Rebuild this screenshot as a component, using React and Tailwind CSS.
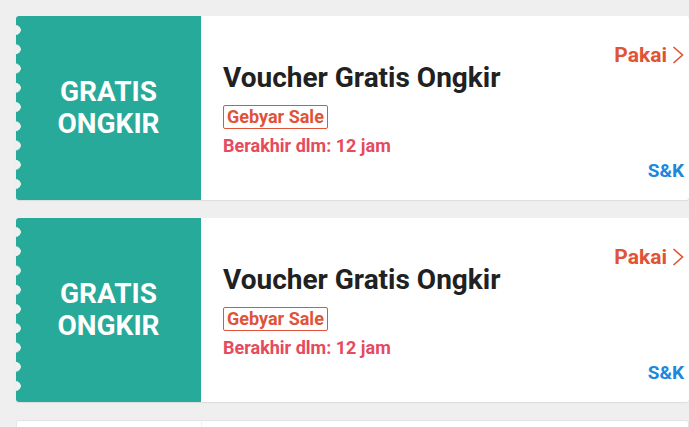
const vouchers = [
  { id: 1, title: 'Voucher Gratis Ongkir', tag: 'Gebyar Sale', expiry: 'Berakhir dlm: 12 jam' },
  { id: 2, title: 'Voucher Gratis Ongkir', tag: 'Gebyar Sale', expiry: 'Berakhir dlm: 12 jam' },
];

function Chevron() {
  return (
    <svg width="12" height="20" viewBox="0 0 12 20" fill="none" className="ml-[5px]">
      <polyline points="1.5,2 10.5,10 1.5,18" stroke="currentColor" strokeWidth="1.6" strokeLinejoin="miter" />
    </svg>
  );
}

function VoucherCard({ voucher }) {
  return (
    <div className="flex h-[184px] w-[673px] shrink-0 rounded-[3px] bg-white shadow-[0_1px_1px_rgba(0,0,0,0.08)] overflow-hidden">
      <div className="relative flex w-[185px] shrink-0 items-center justify-center bg-[#27aa99]">
        {/* scalloped edge */}
        <div className="absolute -left-[5px] top-0 h-[178px] w-[10px] bg-[radial-gradient(circle,#efefef_4.5px,transparent_5px)] bg-[length:10px_19.25px] bg-[position:0_4.4px] bg-repeat-y" />
        <div className="text-center text-[28px] font-bold leading-[32px] text-white">
          GRATIS
          <br />
          ONGKIR
        </div>
      </div>
      <div className="flex flex-1 justify-between pr-[5px]">
        <div className="flex flex-col pl-[22px] pt-[45px]">
          <div className="text-[28px] font-bold leading-[34px] text-[#212121]">{voucher.title}</div>
          <div className="mt-[10px] self-start rounded-[2px] border border-[#e0553a] px-[3px] text-[18px] font-bold leading-[22px] text-[#df5437]">
            {voucher.tag}
          </div>
          <div className="mt-[6px] text-[18px] font-bold leading-[22px] text-[#e64a5d]">{voucher.expiry}</div>
        </div>
        <div className="flex flex-col items-end justify-between pt-[27px] pb-[18px]">
          <div className="flex items-center text-[21px] font-bold leading-[24px] text-[#e05334]">
            Pakai
            <Chevron />
          </div>
          <div className="text-[19px] font-bold leading-[22px] text-[#1c88e0]">S&amp;K</div>
        </div>
      </div>
    </div>
  );
}

export default function App() {
  return (
    <div className="h-[427px] w-[689px] overflow-hidden bg-[#efefef] pl-[16px] pt-[16px] font-['Roboto',sans-serif]">
      <div className="flex flex-col gap-[18px]">
        {vouchers.map((v) => (
          <VoucherCard key={v.id} voucher={v} />
        ))}
        <div className="flex h-[184px] w-[673px] shrink-0 rounded-[3px] border border-[#e4e4e4] bg-white">
          <div className="w-[185px] shrink-0 border-r border-[#f0f0f0]" />
        </div>
      </div>
    </div>
  );
}
